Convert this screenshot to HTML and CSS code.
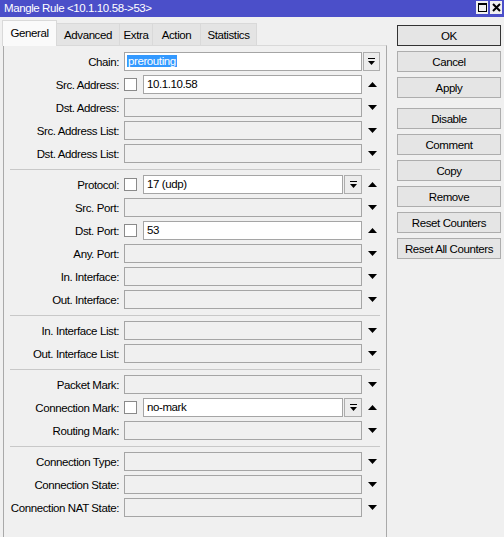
FILE: index.html
```html
<!DOCTYPE html>
<html lang="en">
  <head>
    <meta charset="UTF-8" />
    <title>Mangle Rule &lt;10.1.10.58-&gt;53&gt;</title>
    <link rel="stylesheet" href="styles.css">
  </head>
  <body>
    <div class="titlebar">
      <span class="title">Mangle Rule &lt;10.1.10.58-&gt;53&gt;</span>
      <div class="win-btns">
        <span class="wbtn"><span class="max-box"></span></span>
        <span class="wbtn close">
          <svg width="9" height="9" viewBox="0 0 9 9"><path d="M1 1 L8 8 M8 1 L1 8" stroke="#000" stroke-width="2"/></svg>
        </span>
      </div>
    </div>

    <div class="window">
      <div class="main">
        <div class="tabs">
          <div class="tab tab-general active">General</div>
          <div class="tab tab-advanced">Advanced</div>
          <div class="tab tab-extra">Extra</div>
          <div class="tab tab-action">Action</div>
          <div class="tab tab-stats">Statistics</div>
        </div>

        <div class="panel">
          <div class="row">
            <span class="label">Chain:</span>
            <div class="ctl"><div class="input white"><span class="selected">prerouting</span></div></div>
            <div class="arrow"><span class="drop wide"><svg width="7" height="7" viewBox="0 0 7 7"><rect x="0" y="0" width="7" height="1"/><polygon points="0,3 7,3 3.5,7"/></svg></span></div>
          </div>
          <div class="row">
            <span class="label">Src. Address:</span>
            <div class="ctl"><span class="check"></span><div class="input white">10.1.10.58</div></div>
            <div class="arrow"><svg width="9" height="5" viewBox="0 0 9 5"><polygon points="0,5 9,5 4.5,0"/></svg></div>
          </div>
          <div class="row">
            <span class="label">Dst. Address:</span>
            <div class="ctl"><div class="input"></div></div>
            <div class="arrow"><svg width="9" height="5" viewBox="0 0 9 5"><polygon points="0,0 9,0 4.5,5"/></svg></div>
          </div>
          <div class="row">
            <span class="label">Src. Address List:</span>
            <div class="ctl"><div class="input"></div></div>
            <div class="arrow"><svg width="9" height="5" viewBox="0 0 9 5"><polygon points="0,0 9,0 4.5,5"/></svg></div>
          </div>
          <div class="row">
            <span class="label">Dst. Address List:</span>
            <div class="ctl"><div class="input"></div></div>
            <div class="arrow"><svg width="9" height="5" viewBox="0 0 9 5"><polygon points="0,0 9,0 4.5,5"/></svg></div>
          </div>

          <div class="sep"></div>

          <div class="row">
            <span class="label">Protocol:</span>
            <div class="ctl"><span class="check"></span><div class="input white">17 (udp)</div><span class="drop"><svg width="7" height="7" viewBox="0 0 7 7"><rect x="0" y="0" width="7" height="1"/><polygon points="0,3 7,3 3.5,7"/></svg></span></div>
            <div class="arrow"><svg width="9" height="5" viewBox="0 0 9 5"><polygon points="0,5 9,5 4.5,0"/></svg></div>
          </div>
          <div class="row">
            <span class="label">Src. Port:</span>
            <div class="ctl"><div class="input"></div></div>
            <div class="arrow"><svg width="9" height="5" viewBox="0 0 9 5"><polygon points="0,0 9,0 4.5,5"/></svg></div>
          </div>
          <div class="row">
            <span class="label">Dst. Port:</span>
            <div class="ctl"><span class="check"></span><div class="input white">53</div></div>
            <div class="arrow"><svg width="9" height="5" viewBox="0 0 9 5"><polygon points="0,5 9,5 4.5,0"/></svg></div>
          </div>
          <div class="row">
            <span class="label">Any. Port:</span>
            <div class="ctl"><div class="input"></div></div>
            <div class="arrow"><svg width="9" height="5" viewBox="0 0 9 5"><polygon points="0,0 9,0 4.5,5"/></svg></div>
          </div>
          <div class="row">
            <span class="label">In. Interface:</span>
            <div class="ctl"><div class="input"></div></div>
            <div class="arrow"><svg width="9" height="5" viewBox="0 0 9 5"><polygon points="0,0 9,0 4.5,5"/></svg></div>
          </div>
          <div class="row">
            <span class="label">Out. Interface:</span>
            <div class="ctl"><div class="input"></div></div>
            <div class="arrow"><svg width="9" height="5" viewBox="0 0 9 5"><polygon points="0,0 9,0 4.5,5"/></svg></div>
          </div>

          <div class="sep"></div>

          <div class="row">
            <span class="label">In. Interface List:</span>
            <div class="ctl"><div class="input"></div></div>
            <div class="arrow"><svg width="9" height="5" viewBox="0 0 9 5"><polygon points="0,0 9,0 4.5,5"/></svg></div>
          </div>
          <div class="row">
            <span class="label">Out. Interface List:</span>
            <div class="ctl"><div class="input"></div></div>
            <div class="arrow"><svg width="9" height="5" viewBox="0 0 9 5"><polygon points="0,0 9,0 4.5,5"/></svg></div>
          </div>

          <div class="sep"></div>

          <div class="row">
            <span class="label">Packet Mark:</span>
            <div class="ctl"><div class="input"></div></div>
            <div class="arrow"><svg width="9" height="5" viewBox="0 0 9 5"><polygon points="0,0 9,0 4.5,5"/></svg></div>
          </div>
          <div class="row">
            <span class="label">Connection Mark:</span>
            <div class="ctl"><span class="check"></span><div class="input white">no-mark</div><span class="drop"><svg width="7" height="7" viewBox="0 0 7 7"><rect x="0" y="0" width="7" height="1"/><polygon points="0,3 7,3 3.5,7"/></svg></span></div>
            <div class="arrow"><svg width="9" height="5" viewBox="0 0 9 5"><polygon points="0,5 9,5 4.5,0"/></svg></div>
          </div>
          <div class="row">
            <span class="label">Routing Mark:</span>
            <div class="ctl"><div class="input"></div></div>
            <div class="arrow"><svg width="9" height="5" viewBox="0 0 9 5"><polygon points="0,0 9,0 4.5,5"/></svg></div>
          </div>

          <div class="sep"></div>

          <div class="row">
            <span class="label">Connection Type:</span>
            <div class="ctl"><div class="input"></div></div>
            <div class="arrow"><svg width="9" height="5" viewBox="0 0 9 5"><polygon points="0,0 9,0 4.5,5"/></svg></div>
          </div>
          <div class="row">
            <span class="label">Connection State:</span>
            <div class="ctl"><div class="input"></div></div>
            <div class="arrow"><svg width="9" height="5" viewBox="0 0 9 5"><polygon points="0,0 9,0 4.5,5"/></svg></div>
          </div>
          <div class="row">
            <span class="label">Connection NAT State:</span>
            <div class="ctl"><div class="input"></div></div>
            <div class="arrow"><svg width="9" height="5" viewBox="0 0 9 5"><polygon points="0,0 9,0 4.5,5"/></svg></div>
          </div>
        </div>
      </div>

      <div class="actions">
        <button class="btn default">OK</button>
        <button class="btn">Cancel</button>
        <button class="btn">Apply</button>
        <button class="btn group">Disable</button>
        <button class="btn">Comment</button>
        <button class="btn">Copy</button>
        <button class="btn">Remove</button>
        <button class="btn">Reset Counters</button>
        <button class="btn">Reset All Counters</button>
      </div>
    </div>
  </body>
</html>
```

FILE: styles.css
```css
body {
  margin: 0;
  height: 537px;
  overflow: hidden;
  background-color: #f0f0f0;
  font-family: "Liberation Sans", Arial, sans-serif;
  font-size: 11.5px;
  letter-spacing: -0.4px;
  color: #000;
}

/* title bar */
.titlebar {
  height: 17px;
  background-color: #4b4fc9;
  display: flex;
  align-items: center;
  justify-content: space-between;
}

.title {
  color: #fff;
  padding-left: 4px;
  line-height: 17px;
}

.win-btns {
  display: flex;
  align-self: flex-start;
  margin-right: 1px;
}

.wbtn {
  width: 14px;
  height: 15px;
  background-color: #f0f0f0;
  display: flex;
  align-items: center;
  justify-content: center;
  box-sizing: border-box;
  border: 1px solid #4b4fc9;
}

.max-box {
  width: 9px;
  height: 9px;
  border: 1px solid #000;
  border-top-width: 2px;
  box-sizing: border-box;
}

/* window body */
.window {
  display: flex;
  height: 520px;
}

.main {
  width: 384px;
  margin-left: 3px;
  padding-top: 3px;
  display: flex;
  flex-direction: column;
}

.tabs {
  display: flex;
  height: 25px;
  margin-left: -1px;
}

.tab {
  height: 22px;
  margin-top: 3px;
  text-align: center;
  line-height: 22px;
  background-color: #e4e4e4;
  border: 1px solid #d9d9d9;
  border-bottom: none;
  margin-right: -1px;
  box-sizing: border-box;
}

.tab.active {
  height: 26px;
  margin-top: 0;
  margin-bottom: -1px;
  line-height: 24px;
  background-color: #fafafa;
  position: relative;
}

.tab-general { width: 55px; }
.tab-advanced { width: 64px; }
.tab-extra { width: 34px; }
.tab-action { width: 49px; }
.tab-stats { width: 57px; }

.panel {
  flex: 1;
  border: 1px solid #d9d9d9;
  border-left-color: #a9a9a9;
  border-right-color: #a9a9a9;
  border-bottom: none;
  padding-top: 4px;
}

.row {
  display: flex;
  align-items: center;
  height: 23px;
}

.label {
  width: 115px;
  padding-right: 5px;
  text-align: right;
  white-space: nowrap;
}

.ctl {
  width: 238px;
  height: 19px;
  display: flex;
  align-items: center;
}

.input {
  flex: 1;
  height: 19px;
  box-sizing: border-box;
  border: 1px solid #a5a5a5;
  background-color: #f0f0f0;
  padding-left: 3px;
  line-height: 17px;
  white-space: nowrap;
  overflow: hidden;
}

.input.white {
  background-color: #fff;
}

.selected {
  background-color: #3399ff;
  color: #fff;
  padding: 0 1px;
  margin-left: -1px;
}

.check {
  width: 13px;
  height: 13px;
  box-sizing: border-box;
  border: 1px solid #8a8a8a;
  background-color: #fff;
  margin-right: 6px;
}

.drop {
  width: 18px;
  height: 19px;
  margin-left: 1px;
  box-sizing: border-box;
  border: 1px solid #adadad;
  background-color: #ececec;
  display: flex;
  align-items: center;
  justify-content: center;
}

.drop.wide {
  width: 17px;
  margin-left: 0;
}

.arrow {
  width: 19px;
  display: flex;
  justify-content: center;
}

.arrow > svg {
  margin-left: 1px;
}

.sep {
  height: 1px;
  background-color: #c8c8c8;
  margin: 4px 6px 3px 6px;
}

/* buttons on the right */
.actions {
  width: 104px;
  margin-left: 10px;
  margin-top: 8px;
  display: flex;
  flex-direction: column;
  gap: 5px;
}

.btn {
  height: 21px;
  padding: 0;
  font: inherit;
  letter-spacing: inherit;
  background-color: #e5e5e5;
  border: 1px solid #adadad;
  color: #000;
}

.btn.default {
  border-color: #333;
}

.btn.group {
  margin-top: 5px;
}
```
